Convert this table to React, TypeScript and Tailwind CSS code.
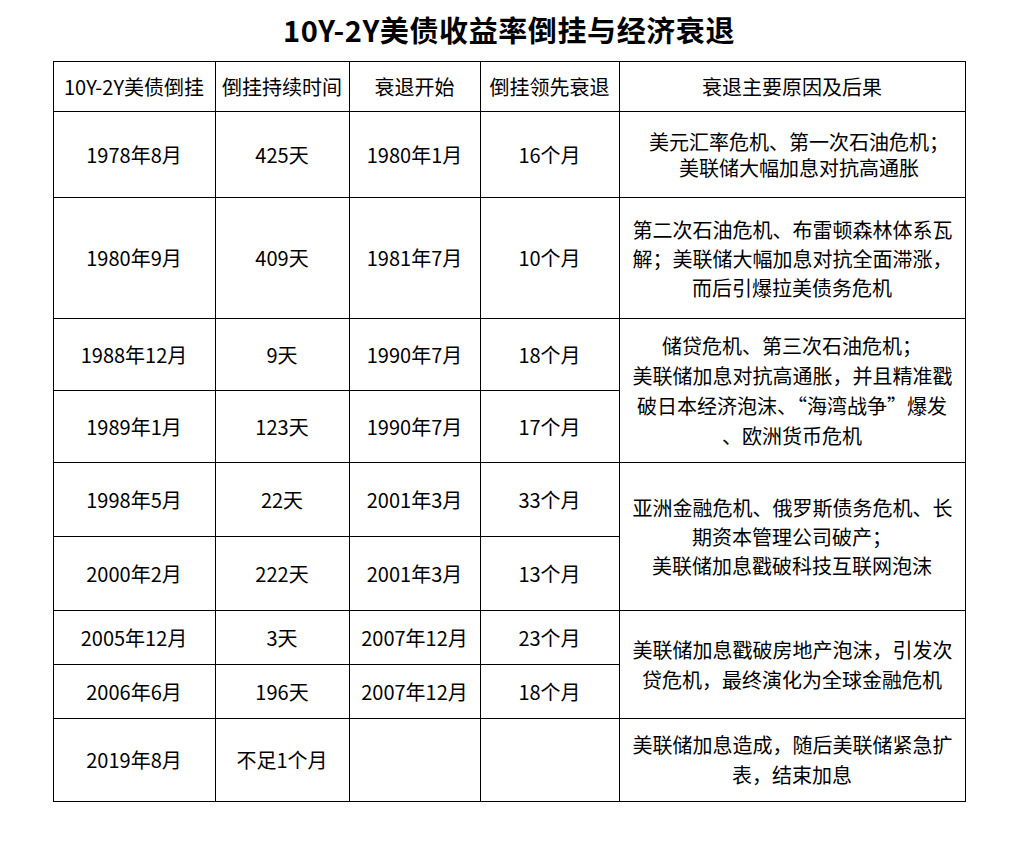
const font = { fontFamily: '"Noto Sans CJK SC", "Noto Sans", sans-serif' };

type Row = {
  start: string;
  days: string;
  recession: string;
  lead: string;
  h: string;
  cause?: { lines: string[]; span: number; lh: string; shift?: string };
};

const rows: Row[] = [
  {
    start: "1978年8月",
    days: "425天",
    recession: "1980年1月",
    lead: "16个月",
    h: "h-[86px]",
    cause: {
      lines: ["美元汇率危机、第一次石油危机；", "美联储大幅加息对抗高通胀"],
      span: 1,
      lh: "leading-[26px]",
      shift: "pl-[27px] pr-[13px]",
    },
  },
  {
    start: "1980年9月",
    days: "409天",
    recession: "1981年7月",
    lead: "10个月",
    h: "h-[121px]",
    cause: {
      lines: [
        "第二次石油危机、布雷顿森林体系瓦",
        "解；美联储大幅加息对抗全面滞涨，",
        "而后引爆拉美债务危机",
      ],
      span: 1,
      lh: "leading-[29px]",
    },
  },
  {
    start: "1988年12月",
    days: "9天",
    recession: "1990年7月",
    lead: "18个月",
    h: "h-[72px]",
    cause: {
      lines: [
        "储贷危机、第三次石油危机；",
        "美联储加息对抗高通胀，并且精准戳",
        "破日本经济泡沫、“海湾战争”爆发",
        "、欧洲货币危机",
      ],
      span: 2,
      lh: "leading-[30px]",
    },
  },
  { start: "1989年1月", days: "123天", recession: "1990年7月", lead: "17个月", h: "h-[72px]" },
  {
    start: "1998年5月",
    days: "22天",
    recession: "2001年3月",
    lead: "33个月",
    h: "h-[74px]",
    cause: {
      lines: [
        "亚洲金融危机、俄罗斯债务危机、长",
        "期资本管理公司破产；",
        "美联储加息戳破科技互联网泡沫",
      ],
      span: 2,
      lh: "leading-[29px]",
    },
  },
  { start: "2000年2月", days: "222天", recession: "2001年3月", lead: "13个月", h: "h-[74px]" },
  {
    start: "2005年12月",
    days: "3天",
    recession: "2007年12月",
    lead: "23个月",
    h: "h-[54px]",
    cause: {
      lines: ["美联储加息戳破房地产泡沫，引发次", "贷危机，最终演化为全球金融危机"],
      span: 2,
      lh: "leading-[30px]",
    },
  },
  { start: "2006年6月", days: "196天", recession: "2007年12月", lead: "18个月", h: "h-[54px]" },
  {
    start: "2019年8月",
    days: "不足1个月",
    recession: "",
    lead: "",
    h: "h-[83px]",
    cause: {
      lines: ["美联储加息造成，随后美联储紧急扩", "表，结束加息"],
      span: 1,
      lh: "leading-[30px]",
    },
  },
];

const cell = "border border-black text-center align-middle p-0";

export default function App() {
  return (
    <div className="min-h-screen w-[1018px] bg-white text-black" style={font}>
      <div className="flex h-[61px] items-center justify-center pb-[3px]">
        <h1 className="text-[29px] font-bold leading-none tracking-[0.6px]">
          10Y-2Y美债收益率倒挂与经济衰退
        </h1>
      </div>

      <table className="mx-auto w-[912px] table-fixed border-collapse text-[20px]">
        <colgroup>
          <col className="w-[162px]" />
          <col className="w-[134px]" />
          <col className="w-[131px]" />
          <col className="w-[139px]" />
          <col className="w-[346px]" />
        </colgroup>
        <thead>
          <tr className="h-[50px]">
            <th className={`${cell} font-normal whitespace-nowrap`}>10Y-2Y美债倒挂</th>
            <th className={`${cell} font-normal whitespace-nowrap`}>倒挂持续时间</th>
            <th className={`${cell} font-normal`}>衰退开始</th>
            <th className={`${cell} font-normal whitespace-nowrap`}>倒挂领先衰退</th>
            <th className={`${cell} font-normal`}>衰退主要原因及后果</th>
          </tr>
        </thead>
        <tbody>
          {rows.map((r) => (
            <tr key={r.start} className={r.h}>
              <td className={cell}>{r.start}</td>
              <td className={cell}>{r.days}</td>
              <td className={cell}>{r.recession}</td>
              <td className={cell}>{r.lead}</td>
              {r.cause && (
                <td rowSpan={r.cause.span} className={`${cell} ${r.cause.shift ?? "px-[13px]"}`}>
                  <div className={r.cause.lh}>
                    {r.cause.lines.map((l) => (
                      <div key={l} className="whitespace-nowrap">
                        {l}
                      </div>
                    ))}
                  </div>
                </td>
              )}
            </tr>
          ))}
        </tbody>
      </table>
    </div>
  );
}
